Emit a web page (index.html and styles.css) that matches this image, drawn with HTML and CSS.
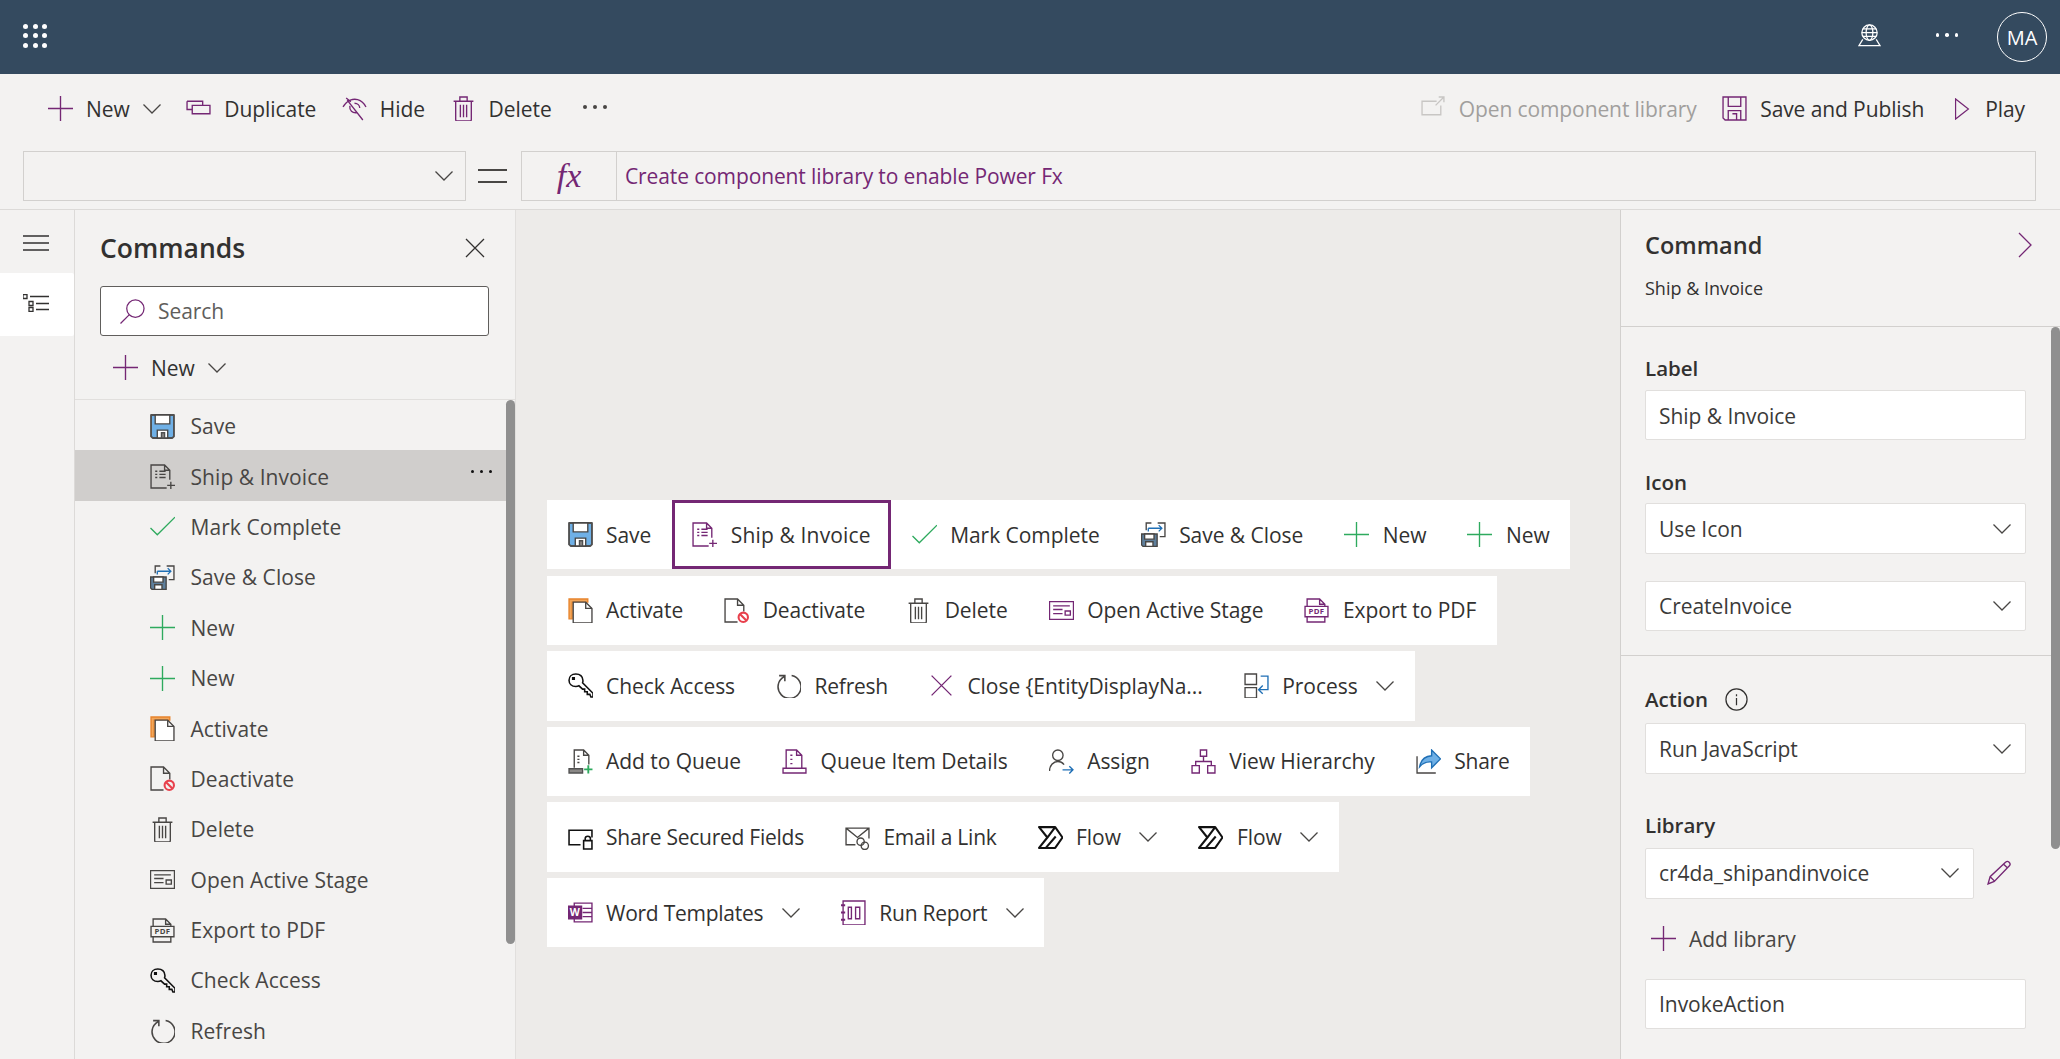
FILE: index.html
```html
<!DOCTYPE html>
<html lang="en">
<head>
<meta charset="utf-8">
<title>Command designer</title>
<link rel="stylesheet" href="styles.css">
</head>
<body>
<svg class="defs" aria-hidden="true">
  <symbol id="plus" viewBox="0 0 24 24"><path d="M12 0v24M0 12h24"/></symbol>
  <symbol id="chev" viewBox="0 0 18 10"><path d="M.5.5 9 9 17.500.5"/></symbol>
  <symbol id="dup" viewBox="0 0 24 24"><path d="M1 5h15v4M1 5v8h5M6 9h17v8H6z"/></symbol>
  <symbol id="hide" viewBox="0 0 24 24"><path d="M1 10.500C5 3.500 11 2.500 15 3.500c3 .8 6 3 8 7M8.500 5.500 4 2m16 21L5 4M7.500 9.500C7 14 10 16.500 14 16M12 7c3 0 5 2 5 4.500"/></symbol>
  <symbol id="trash" viewBox="0 0 24 24"><path d="M2.500 5h19M4.500 5v17.500c0 .8.500 1.500 1.500 1.500h12c1 0 1.500-.7 1.500-1.500V5M8.500 5V1h7v4M9 8.500v12M12 8.500v12M15 8.500v12"/></symbol>
  <symbol id="floppy" viewBox="0 0 24 24"><path class="f-blue" d="M1 1h22v20.500L21.500 23h-19L1 21.500z"/><path class="f-white" d="M5 1h14v8.500H5zM7 15.500h10V23H7z"/><path class="f-grey" d="M11 18h3v5h-3z"/></symbol>
  <symbol id="invoice" viewBox="0 0 24 24"><path d="M19 15V6l-5-5H1v22h15M14 1v5h5M5 7h2M5 10h2M5 13h2M9 7h6M9 10h6M9 13h6M20 17v7M16.500 20.500H24"/></symbol>
  <symbol id="check" viewBox="0 0 24 24"><path d="M.5 13.500 7 20 24 3"/></symbol>
  <symbol id="saveclose" viewBox="0 0 24 24"><path class="f-steel" d="M.5 11.500h15v12H2l-1.500-1.500z"/><path class="f-white" d="M3.500 11.500h9v5h-9zM4.500 19h7v4.500h-7z"/><path d="M5 8V1h5M16 1h7v13h-5"/><path class="s-blue" d="M7 6h13M17 3l3 3-3 3M7 6v3"/></symbol>
  <symbol id="activate" viewBox="0 0 24 24"><path class="f-orange" d="M1 1h18v3H4v16H1z"/><path class="f-white" d="M5 4h12l6 6v14H5z"/><path d="M17 4v6h6"/></symbol>
  <symbol id="deact" viewBox="0 0 24 24"><path d="M13 23H1V1h12l6 6v6M13 1v6h6"/><circle class="s-red" cx="18.500" cy="18.500" r="4.500"/><path class="s-red" d="m15.500 15.500 6 6"/></symbol>
  <symbol id="stage" viewBox="0 0 24 24"><path d="M.5 3.500h23v17H.5zM4 7.500h16M4 11h9M4 15h9M15.500 12.500h5v4h-5z"/></symbol>
  <symbol id="pdf" viewBox="0 0 24 24"><path d="M3 8V1h12l5 5v2M15 1v5h5M3 18v5h17v-5M1 8h22v10H1z"/></symbol>
  <symbol id="key" viewBox="0 0 24 24"><path class="s-black" d="M7.500 1C3.500 1 1 3.500 1 7s2.500 6 6.500 6c1 0 2-.2 3-.7l3.500 3.200h2V18h2.500v2.500h2.500l1 2.500H24v-3.500L14 9.500c.3-.8.4-1.600.3-2.500C14 3.500 11.500 1 7.500 1zM4.500 4.500h1.500V6H4.500z"/></symbol>
  <symbol id="refresh" viewBox="0 0 24 24"><path class="s-mid" d="M15 2.500A11 11 0 1 1 8 3.500M8.500 8V2.500H3"/></symbol>
  <symbol id="close" viewBox="0 0 24 24"><path d="m2.500 2.500 19 19M21.500 2.500l-19 19"/></symbol>
  <symbol id="process" viewBox="0 0 24 24"><path d="M1 1h11v10H1zM1 14h11v10H1z"/><path class="s-blue" d="M16 3h7v13H14M18 12l-4 4 4 4"/></symbol>
  <symbol id="addq" viewBox="0 0 24 24"><path d="M6 18V1h9l5 5v9M15 1v5h5M9 7h2M9 10h2M9 13h2"/><path class="f-grey" d="M1 19h13v4H1z"/><path class="s-green" d="M19.500 15.500v8M15.500 19.500h8"/></symbol>
  <symbol id="qitem" viewBox="0 0 24 24"><path d="M4 18V1h10l5 5v12M14 1v5h5M8 6h2M8 10h2M8 14h2M1 18.500h22V23H1z"/></symbol>
  <symbol id="assign" viewBox="0 0 24 24"><circle cx="8.500" cy="6" r="5"/><path d="M.5 21c0-5 3.500-9 8-9 2.500 0 4.500 1 6 3"/><path class="s-blue" d="M13 20h10M19.500 16.500 23 20l-3.500 3.500"/></symbol>
  <symbol id="tree" viewBox="0 0 24 24"><path d="M9 1h6v6H9zM1 16h7v7H1zM16 16h7v7h-7zM12 7v5M4.500 16v-4h15v4"/></symbol>
  <symbol id="share" viewBox="0 0 24 24"><path class="f-sky" d="M15 1v5.500C8 7 4.500 11 3.500 17c3-3.500 6.500-5 11.500-4.500V18l8.500-8.500z"/><path d="M1 7v16h18"/></symbol>
  <symbol id="secure" viewBox="0 0 24 24"><path class="s-black" d="M12 19H1V5h22v7M15 15h8v8h-8zM16.500 15v-2c0-3 5-3 5 0v2"/></symbol>
  <symbol id="mail" viewBox="0 0 24 24"><path d="M10 19H1V3h22v10M1 3l11 9 11-9"/><circle cx="15" cy="16" r="3.500"/><circle cx="19" cy="20" r="3.500"/></symbol>
  <symbol id="flow" viewBox="0 0 24 24"><path class="s-bold" d="M1 2h15.500l7 10-7 10H1l8-10zM9 12l7.500-10M7.500 22 17 11"/></symbol>
  <symbol id="word" viewBox="0 0 24 24"><path d="M6 3h17v18H6zM14 8h9M14 12h9M14 16h9"/><path class="f-purple" d="M0 6h13v12H0z"/></symbol>
  <symbol id="report" viewBox="0 0 24 24"><path d="M2 1h21v23H2zM7 7h3v11H7zM14 7h4v11h-4z"/><path class="s-thick" d="M0 5h4M0 12h4M0 19h4"/></symbol>
  <symbol id="open" viewBox="0 0 24 24"><path d="M15 5H1v13h18V9M14 9l8-8M17 1h5v5"/></symbol>
  <symbol id="disk" viewBox="0 0 24 24"><path d="M1 1h22v22H3l-2-2zM6 1v9h12V1M6 23v-9h12v9M10 17h4v6"/></symbol>
  <symbol id="play" viewBox="0 0 16 24"><path d="M1 1v22l14-11z"/></symbol>
  <symbol id="rchev" viewBox="0 0 14 26"><path d="m1 1 12 12L1 25"/></symbol>
  <symbol id="pen" viewBox="0 0 24 24"><path d="M1 23l2-7L18 2c2-2 5.500 1.500 3.500 3.500L7 20.500zM3 16l4.500 4.500M16 4l4 4"/></symbol>
  <symbol id="search" viewBox="0 0 26 26"><circle cx="16" cy="10" r="9"/><path d="m9.500 16.500-9 9"/></symbol>
  <symbol id="x" viewBox="0 0 20 20"><path d="m1 1 18 18M19 1 1 19"/></symbol>
  <symbol id="menu" viewBox="0 0 26 16"><path d="M0 1h26M0 8h26M0 15h26"/></symbol>
  <symbol id="tasks" viewBox="0 0 26 18"><path d="M0 .5h4v4H0zM6 7.500h4v4H6zM6 13.500h4v4H6zM7 2.500h19M13 9.500h13M13 15.500h13"/></symbol>
  <symbol id="globe" viewBox="0 0 24 24"><circle cx="12" cy="9" r="8"/><ellipse cx="12" cy="9" rx="3.500" ry="8"/><path d="M4 9h16M5 5h14M5 13h14M5 16l-4 6.500h22l-4-6.500"/></symbol>
</svg>

<header class="topbar">
  <div class="waffle"><i></i><i></i><i></i><i></i><i></i><i></i><i></i><i></i><i></i></div>
  <div class="top-right">
    <svg class="top-globe"><use href="#globe"/></svg>
    <div class="dots dots-light"><i></i><i></i><i></i></div>
    <div class="avatar">MA</div>
  </div>
</header>

<section class="ribbon">
  <div class="cmdbar">
    <div class="cmd cmd-new"><svg class="ic purple"><use href="#plus"/></svg><span>New</span><svg class="chev"><use href="#chev"/></svg></div>
    <div class="cmd"><svg class="ic purple"><use href="#dup"/></svg><span>Duplicate</span></div>
    <div class="cmd"><svg class="ic purple"><use href="#hide"/></svg><span>Hide</span></div>
    <div class="cmd"><svg class="ic purple"><use href="#trash"/></svg><span>Delete</span></div>
    <div class="dots dots-dark"><i></i><i></i><i></i></div>
    <div class="cmdbar-right">
      <div class="cmd disabled"><svg class="ic muted"><use href="#open"/></svg><span>Open component library</span></div>
      <div class="cmd cmd-save"><svg class="ic purple"><use href="#disk"/></svg><span>Save and Publish</span></div>
      <div class="cmd cmd-play"><svg class="ic-play purple"><use href="#play"/></svg><span>Play</span></div>
    </div>
  </div>
  <div class="formula">
    <div class="prop"><svg class="chev muted"><use href="#chev"/></svg></div>
    <div class="equals"></div>
    <div class="fx-box">
      <div class="fx">fx</div>
      <div class="fx-text">Create component library to enable Power Fx</div>
    </div>
  </div>
</section>

<main class="work">
  <nav class="rail">
    <div class="rail-btn"><svg class="rail-menu"><use href="#menu"/></svg></div>
    <div class="rail-btn active"><svg class="rail-tasks"><use href="#tasks"/></svg></div>
  </nav>

  <aside class="commands">
    <div class="commands-head"><h2>Commands</h2><svg class="x"><use href="#x"/></svg></div>
    <div class="search"><svg class="search-ic"><use href="#search"/></svg><span>Search</span></div>
    <div class="list-new"><svg class="ic purple"><use href="#plus"/></svg><span>New</span><svg class="chev"><use href="#chev"/></svg></div>
    <div class="list-wrap">
      <ul class="list">
        <li><svg class="ic"><use href="#floppy"/></svg>Save</li>
        <li class="sel"><svg class="ic"><use href="#invoice"/></svg>Ship &amp; Invoice<div class="dots dots-black"><i></i><i></i><i></i></div></li>
        <li><svg class="ic green"><use href="#check"/></svg>Mark Complete</li>
        <li><svg class="ic"><use href="#saveclose"/></svg>Save &amp; Close</li>
        <li><svg class="ic green"><use href="#plus"/></svg>New</li>
        <li><svg class="ic green"><use href="#plus"/></svg>New</li>
        <li><svg class="ic"><use href="#activate"/></svg>Activate</li>
        <li><svg class="ic"><use href="#deact"/></svg>Deactivate</li>
        <li><svg class="ic"><use href="#trash"/></svg>Delete</li>
        <li><svg class="ic"><use href="#stage"/></svg>Open Active Stage</li>
        <li><svg class="ic" viewBox="0 0 24 24"><use href="#pdf"/><text x="12" y="15.700" text-anchor="middle" class="pdf-t">PDF</text></svg>Export to PDF</li>
        <li><svg class="ic"><use href="#key"/></svg>Check Access</li>
        <li><svg class="ic"><use href="#refresh"/></svg>Refresh</li>
      </ul>
      <div class="scroll scroll-list"></div>
    </div>
  </aside>

  <section class="canvas">
    <div class="bar">
      <div class="item"><svg class="ic"><use href="#floppy"/></svg><span>Save</span></div>
      <div class="item picked"><svg class="ic purple"><use href="#invoice"/></svg><span>Ship &amp; Invoice</span></div>
      <div class="item"><svg class="ic green"><use href="#check"/></svg><span>Mark Complete</span></div>
      <div class="item"><svg class="ic"><use href="#saveclose"/></svg><span>Save &amp; Close</span></div>
      <div class="item"><svg class="ic green"><use href="#plus"/></svg><span>New</span></div>
      <div class="item"><svg class="ic green"><use href="#plus"/></svg><span>New</span></div>
    </div>
    <div class="bar">
      <div class="item"><svg class="ic"><use href="#activate"/></svg><span>Activate</span></div>
      <div class="item"><svg class="ic"><use href="#deact"/></svg><span>Deactivate</span></div>
      <div class="item"><svg class="ic"><use href="#trash"/></svg><span>Delete</span></div>
      <div class="item"><svg class="ic purple"><use href="#stage"/></svg><span>Open Active Stage</span></div>
      <div class="item"><svg class="ic purple" viewBox="0 0 24 24"><use href="#pdf"/><text x="12" y="15.700" text-anchor="middle" class="pdf-t">PDF</text></svg><span>Export to PDF</span></div>
    </div>
    <div class="bar">
      <div class="item"><svg class="ic"><use href="#key"/></svg><span>Check Access</span></div>
      <div class="item"><svg class="ic"><use href="#refresh"/></svg><span class="tight">Refresh</span></div>
      <div class="item"><svg class="ic purple"><use href="#close"/></svg><span>Close {EntityDisplayNa...</span></div>
      <div class="item"><svg class="ic"><use href="#process"/></svg><span>Process</span><svg class="chev"><use href="#chev"/></svg></div>
    </div>
    <div class="bar">
      <div class="item"><svg class="ic"><use href="#addq"/></svg><span>Add to Queue</span></div>
      <div class="item"><svg class="ic purple"><use href="#qitem"/></svg><span>Queue Item Details</span></div>
      <div class="item"><svg class="ic"><use href="#assign"/></svg><span>Assign</span></div>
      <div class="item"><svg class="ic purple"><use href="#tree"/></svg><span>View Hierarchy</span></div>
      <div class="item"><svg class="ic"><use href="#share"/></svg><span class="tight">Share</span></div>
    </div>
    <div class="bar">
      <div class="item"><svg class="ic"><use href="#secure"/></svg><span class="tight">Share Secured Fields</span></div>
      <div class="item"><svg class="ic"><use href="#mail"/></svg><span class="tight">Email a Link</span></div>
      <div class="item"><svg class="ic"><use href="#flow"/></svg><span>Flow</span><svg class="chev"><use href="#chev"/></svg></div>
      <div class="item"><svg class="ic"><use href="#flow"/></svg><span>Flow</span><svg class="chev"><use href="#chev"/></svg></div>
    </div>
    <div class="bar">
      <div class="item"><svg class="ic purple" viewBox="0 0 24 24"><use href="#word"/><text x="6.500" y="15.500" text-anchor="middle" class="w-t">W</text></svg><span class="tight">Word Templates</span><svg class="chev"><use href="#chev"/></svg></div>
      <div class="item"><svg class="ic purple"><use href="#report"/></svg><span class="tight">Run Report</span><svg class="chev"><use href="#chev"/></svg></div>
    </div>
  </section>

  <aside class="props">
    <div class="props-head">
      <div class="props-title"><h2>Command</h2><svg class="rchev purple"><use href="#rchev"/></svg></div>
      <div class="props-sub">Ship &amp; Invoice</div>
    </div>
    <div class="props-body">
      <div class="props-sec sec-a">
        <div class="lbl">Label</div>
        <div class="field field-label">Ship &amp; Invoice</div>
        <div class="lbl lbl-icon">Icon</div>
        <div class="field field-sel">Use Icon<svg class="chev"><use href="#chev"/></svg></div>
        <div class="field field-sel field-next">CreateInvoice<svg class="chev"><use href="#chev"/></svg></div>
      </div>
      <div class="props-sec sec-b">
        <div class="lbl lbl-action">Action<svg class="info" viewBox="0 0 24 24"><circle cx="12" cy="12" r="11"/><path d="M12 10.500V18M12 6.500v2"/></svg></div>
        <div class="field field-sel">Run JavaScript<svg class="chev"><use href="#chev"/></svg></div>
        <div class="lbl lbl-lib">Library</div>
        <div class="lib-row">
          <div class="field field-sel field-lib">cr4da_shipandinvoice<svg class="chev"><use href="#chev"/></svg></div>
          <svg class="pen purple"><use href="#pen"/></svg>
        </div>
        <div class="add-lib"><svg class="ic purple"><use href="#plus"/></svg><span>Add library</span></div>
        <div class="field field-last">InvokeAction</div>
      </div>
      <div class="scroll scroll-props"></div>
    </div>
  </aside>
</main>
</body>
</html>
```
FILE: styles.css
```css
* { box-sizing: border-box; }
html, body { margin: 0; height: 100%; overflow: hidden; }
body {
  display: flex;
  flex-direction: column;
  height: 1059px;
  font-family: "Open Sans", "Liberation Sans", sans-serif;
  font-size: 21px;
  letter-spacing: -.05px;
  color: #323130;
  background: #f3f2f1;
}
.defs { width: 0; height: 0; position: absolute; }
h2 { margin: 0; font-weight: 600; }
ul { list-style: none; margin: 0; padding: 0; }

svg { fill: none; stroke: currentColor; stroke-width: 1.3; flex: none; overflow: visible; }
.ic { width: 25px; height: 25px; color: #484644; }
.purple { color: #742774; }
.green { color: #2eaa5e; }
.muted { color: #c8c6c4; }
.chev { width: 18px; height: 10px; color: #484644; }
.f-blue { fill: #6fb0e6; stroke: #505050; stroke-width: 1.800; stroke-linejoin: round; }
.f-white { fill: #fff; }
.f-grey { fill: #8a8886; stroke: #505050; }
.f-steel { fill: #5e7f9c; }
.f-orange { fill: #f2a65a; stroke: #e8842c; }
.f-sky { fill: #6fb0e6; stroke: #1f6fb5; }
.f-purple { fill: #742774; stroke: #742774; }
.s-blue { stroke: #1f6fb5; }
.s-red { stroke: #e8404c; stroke-width: 2; }
.s-green { stroke: #2eaa5e; stroke-width: 1.8; }
.s-black { stroke: #111; stroke-width: 1.5; }
.s-bold { stroke: #111; stroke-width: 2; stroke-linejoin: round; }
.s-mid { stroke-width: 1.500; }
.s-thick { stroke-width: 2; }
.pdf-t { font-size: 7.500px; font-weight: 700; fill: currentColor; stroke: none; letter-spacing: .3px; }
.w-t { font-size: 10px; font-weight: 700; fill: #fff; stroke: none; }

.dots { display: flex; gap: 6px; }
.dots i { width: 4px; height: 4px; border-radius: 50%; background: currentColor; }

/* top bar */
.topbar {
  flex: none;
  height: 74px;
  background: #344a5f;
  color: #fff;
  display: flex;
  align-items: center;
  justify-content: space-between;
  padding: 0 13px 0 23px;
}
.waffle { display: grid; grid-template-columns: repeat(3, 5px); gap: 4.500px; margin-top: -3px; }
.waffle i { width: 5px; height: 5px; border-radius: 50%; background: #fff; }
.top-right { display: flex; align-items: center; }
.top-globe { width: 23px; height: 23px; margin-right: 55px; margin-top: -3px; }
.dots-light { margin-right: 39px; margin-top: -4px; }
.dots-light i { width: 3.500px; height: 3.500px; }
.avatar {
  width: 50px; height: 50px;
  border: 1.500px solid #fff;
  border-radius: 50%;
  display: flex; align-items: center; justify-content: center;
  font-size: 20px;
}

/* ribbon */
.ribbon { flex: none; height: 136px; border-bottom: 1px solid #dcdad8; padding: 22px 0 0; }
.cmdbar { display: flex; align-items: center; height: 25px; padding: 0 35px 0 48px; margin-bottom: 30px; }
.cmd { display: flex; align-items: center; gap: 13px; margin-right: 25.500px; white-space: nowrap; }
.dots-dark { margin-left: 6px; margin-top: -3px; color: #484644; }
.cmdbar-right { margin-left: auto; display: flex; letter-spacing: -.1px; }
.cmd-save { margin-right: 30px; }
.cmd-play { gap: 15px; margin-right: 0; }
.disabled { color: #a19f9d; }
.ic-play { width: 16px; height: 22px; }
.formula { display: flex; align-items: center; padding: 0 24px 0 23px; height: 50px; }
.prop {
  width: 443px; height: 50px;
  border: 1.500px solid #d2d0ce;
  display: flex; align-items: center; justify-content: flex-end;
  padding-right: 12px;
}
.equals { width: 29px; height: 14px; margin: 0 14px 0 12px; border-top: 2px solid #484644; border-bottom: 2px solid #484644; }
.fx-box { flex: 1; height: 50px; border: 1.500px solid #d2d0ce; display: flex; align-items: center; }
.fx {
  width: 95px; height: 100%;
  border-right: 1.500px solid #d2d0ce;
  display: flex; align-items: center; justify-content: center;
  font-family: "Liberation Serif", serif;
  font-style: italic;
  font-size: 34px;
  color: #742774;
}
.fx-text { padding-left: 8px; color: #742774; letter-spacing: -.12px; }

/* workspace */
.work { flex: 1; display: flex; min-height: 0; }
.rail { flex: none; width: 75px; border-right: 1px solid #dcdad8; padding-top: 1px; }
.rail-btn { height: 62px; padding-right: 3px; display: flex; align-items: center; justify-content: center; }
.rail-btn.active { background: #fff; height: 63px; border-radius: 0 2px 2px 0; }
.rail-menu { width: 26px; height: 16px; color: #323130; margin-top: 2px; }
.rail-tasks { width: 26px; height: 18px; color: #323130; margin-top: -3px; }

/* commands panel */
.commands { flex: none; width: 441px; display: flex; flex-direction: column; border-right: 1px solid #e1dfdd; }
.commands-head { display: flex; align-items: center; justify-content: space-between; padding: 0 30px 0 25px; height: 76px; }
.commands-head h2 { font-size: 26.500px; letter-spacing: 0; }
.x { width: 20px; height: 20px; }
.search {
  margin: 0 26px 0 25px;
  height: 50px;
  background: #fff;
  border: 1.500px solid #605e5c;
  border-radius: 3px;
  display: flex; align-items: center; gap: 13px;
  padding-left: 19px;
  color: #605e5c;
}
.search-ic { width: 25px; height: 25px; color: #742774; }
.list-new { display: flex; align-items: center; gap: 13px; padding-left: 38px; height: 64px; border-bottom: 1px solid #e1dfdd; }
.list-wrap { position: relative; flex: 1; min-height: 0; overflow: hidden; }
.list li { display: flex; align-items: center; gap: 15.500px; height: 50.400px; padding: 2px 0 0 75px; color: #484644; position: relative; letter-spacing: .06px; }
.list li.sel { background: #d0cecc; margin-right: 9px; }
.dots-black { position: absolute; right: 14px; top: 20px; color: #111; }
.dots-black i { width: 3px; height: 3px; }
.scroll { position: absolute; right: 0; width: 9px; background: #8f8f8f; border-radius: 5px; }
.scroll-list { top: 0; height: 544px; }
.scroll-props { top: 0; height: 522px; }

/* canvas */
.canvas { flex: 1; min-width: 0; background: #edebe9; padding: 290px 0 0 31px; display: flex; flex-direction: column; align-items: flex-start; gap: 6.200px; }
.bar { flex: none; height: 69.400px; background: #fff; display: flex; align-items: stretch; }
.item { display: flex; align-items: center; gap: 13.500px; padding: 0 20.500px; white-space: nowrap; }
.item .chev { margin-left: 5px; }
.tight { letter-spacing: -.25px; }
.picked { outline: 3px solid #742774; outline-offset: -3px; letter-spacing: .15px; }

/* properties panel */
.props { flex: none; width: 440px; border-left: 1px solid #d2d0ce; display: flex; flex-direction: column; }
.props-head { height: 117px; padding: 0 0 0 24px; border-bottom: 1.500px solid #d2d0ce; flex: none; }
.props-title { display: flex; align-items: center; justify-content: space-between; padding: 11px 28px 0 0; height: 58px; }
.props-title h2 { font-size: 23.500px; letter-spacing: 0; }
.rchev { width: 14px; height: 26px; }
.props-sub { font-size: 18px; letter-spacing: 0; margin-top: 8px; }
.props-body { position: relative; flex: 1; min-height: 0; overflow: hidden; }
.props-sec { margin-right: 9px; padding: 0 25px 0 24px; }
.sec-a { height: 329px; padding-top: 26px; border-bottom: 1.500px solid #d2d0ce; }
.sec-b { padding-top: 28px; }
.lbl { font-weight: 600; font-size: 20.500px; letter-spacing: 0; height: 30px; line-height: 30px; margin-bottom: 7px; }
.lbl-icon { margin-top: 27px; margin-bottom: 6px; }
.lbl-action { display: flex; align-items: center; gap: 17px; margin-bottom: 9px; }
.lbl-lib { margin-top: 35.500px; margin-bottom: 8px; }
.info { width: 23px; height: 23px; color: #323130; }
.field {
  height: 50px;
  background: #fff;
  border: 1px solid #e1dfdd;
  border-radius: 2px;
  display: flex; align-items: center; justify-content: space-between;
  padding: 0 13px;
  color: #3b3a39;
}
.field-label { padding-top: 2px; }
.field-sel { height: 51px; padding-right: 14px; }
.field-next { margin-top: 27px; height: 50px; }
.lib-row { display: flex; align-items: center; gap: 13px; }
.field-lib { width: 329px; }
.pen { width: 25px; height: 25px; margin-top: -2px; }
.add-lib { display: flex; align-items: center; gap: 13px; margin: 26px 0 26px 6px; color: #484644; }
.field-last { height: 50px; }
```
